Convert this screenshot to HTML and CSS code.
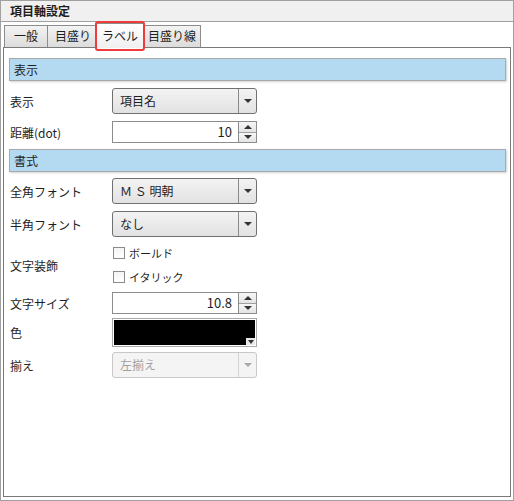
FILE: index.html
```html
<!DOCTYPE html>
<html lang="ja">
<head>
<meta charset="utf-8">
<title>項目軸設定</title>
<link rel="stylesheet" href="styles.css">
</head>
<body>
<div class="window">
  <div class="titlebar">項目軸設定</div>
  <div class="tabs">
    <div class="tab">一般</div>
    <div class="tab">目盛り</div>
    <div class="tab selected">ラベル</div>
    <div class="tab">目盛り線</div>
  </div>
  <div class="panel">
    <div class="section">表示</div>
    <div class="row r-combo1">
      <div class="label">表示</div>
      <div class="combo"><span class="combo-text">項目名</span><span class="combo-btn"><i class="tri-down"></i></span></div>
    </div>
    <div class="row r-spin1">
      <div class="label">距離(dot)</div>
      <div class="spin"><span class="spin-text">10</span><span class="spin-btns"><span class="sb"><i class="tri-up"></i></span><span class="sb"><i class="tri-down"></i></span></span></div>
    </div>
    <div class="section s2">書式</div>
    <div class="row r-combo2">
      <div class="label">全角フォント</div>
      <div class="combo"><span class="combo-text">Ｍ Ｓ 明朝</span><span class="combo-btn"><i class="tri-down"></i></span></div>
    </div>
    <div class="row r-combo3">
      <div class="label">半角フォント</div>
      <div class="combo"><span class="combo-text">なし</span><span class="combo-btn"><i class="tri-down"></i></span></div>
    </div>
    <div class="row r-deco">
      <div class="label">文字装飾</div>
      <div class="checks">
        <label class="check"><span class="box"></span>ボールド</label>
        <label class="check"><span class="box"></span>イタリック</label>
      </div>
    </div>
    <div class="row r-spin2">
      <div class="label">文字サイズ</div>
      <div class="spin"><span class="spin-text">10.8</span><span class="spin-btns"><span class="sb"><i class="tri-up"></i></span><span class="sb"><i class="tri-down"></i></span></span></div>
    </div>
    <div class="row r-color">
      <div class="label">色</div>
      <div class="color"><div class="swatch"></div><span class="color-drop"><i class="tri-down small"></i></span></div>
    </div>
    <div class="row r-combo4">
      <div class="label">揃え</div>
      <div class="combo disabled"><span class="combo-text">左揃え</span><span class="combo-btn"><i class="tri-down"></i></span></div>
    </div>
  </div>
</div>
</body>
</html>
```

FILE: styles.css
```css
* { box-sizing: border-box; }
html, body { margin: 0; padding: 0; background: #fff; }
body {
  font-family: "Noto Sans CJK JP", "Noto Sans", sans-serif;
  font-size: 12px;
  color: #1e1e1e;
}
.window {
  width: 514px;
  height: 501px;
  border: 1px solid #a0a0a0;
  display: flex;
  flex-direction: column;
}
.titlebar {
  height: 21px;
  background: #f0f0f0;
  border-bottom: 1px solid #a0a0a0;
  font-weight: bold;
  line-height: 19px;
  padding-left: 9px;
  flex: none;
}
.tabs {
  display: flex;
  align-items: flex-end;
  margin: 3px 0 0 3px;
  height: 22px;
  flex: none;
  position: relative;
  z-index: 1;
}
.tab {
  height: 22px;
  border: 1px solid #8c8c8c;
  border-bottom: none;
  margin-right: -1px;
  background: linear-gradient(#f3f3f3, #dcdcdc);
  padding: 0 7px;
  line-height: 20px;
  white-space: nowrap;
}
.tab:first-child { padding: 0 9px; }
.tab:last-child { padding: 0 4px; }
.tab.selected {
  position: relative;
  height: 25px;
  margin: 0 -1px -1px -2px;
  padding: 0 5px;
  background: linear-gradient(#ffffff, #f0f0f0);
  border-color: #8c8c8c;
  line-height: 24px;
  z-index: 2;
}
.tab.selected::after {
  content: "";
  position: absolute;
  left: -2px;
  right: -2px;
  top: -3px;
  bottom: -3px;
  border: 2px solid #ee3b3b;
  border-radius: 3px;
}
.panel {
  flex: 1;
  margin: 0 2px 3px 2px;
  border: 1px solid #7a7a7a;
  padding: 10px 4px 0 5px;
  display: flex;
  flex-direction: column;
}
.section {
  height: 23px;
  background: #b4daf1;
  border: 1px solid #a9a9a9;
  box-shadow: 1px 1px 2px rgba(0,0,0,0.18);
  padding-left: 4px;
  line-height: 21px;
  flex: none;
}
.section.s2 { margin-top: 6px; }
.row {
  display: grid;
  grid-template-columns: 102px 145px;
  align-items: center;
  padding-left: 1px;
  flex: none;
}
.label { white-space: nowrap; }
.r-combo1 { margin-top: 7px; height: 26px; }
.r-spin1 { margin-top: 7px; height: 22px; }
.r-combo2 { margin-top: 6px; height: 26px; }
.r-combo3 { margin-top: 7px; height: 26px; }
.r-deco { margin-top: 4px; height: 48px; }
.r-spin2 { margin-top: 3px; height: 22px; }
.r-color { margin-top: 4px; height: 29px; }
.r-combo4 { margin-top: 5px; height: 26px; }

.combo {
  height: 100%;
  display: flex;
  border: 1px solid #707070;
  border-radius: 3px;
  background: linear-gradient(#f3f3f3, #e2e2e2);
}
.combo-text {
  flex: 1;
  padding-left: 7px;
  line-height: 24px;
  white-space: nowrap;
}
.combo-btn {
  width: 18px;
  border-left: 1px solid #8a8a8a;
  display: flex;
  align-items: center;
  justify-content: center;
}
.combo.disabled {
  border-color: #c8c8c8;
  background: #f4f4f4;
  color: #a0a0a0;
}
.combo.disabled .combo-btn { border-left-color: #d4d4d4; }
.combo.disabled .tri-down { border-top-color: #a8a8a8; }

.tri-down {
  width: 0; height: 0;
  border-left: 4px solid transparent;
  border-right: 4px solid transparent;
  border-top: 4px solid #333;
}
.tri-up {
  width: 0; height: 0;
  border-left: 4px solid transparent;
  border-right: 4px solid transparent;
  border-bottom: 4px solid #333;
}
.tri-down.small {
  border-left-width: 3px;
  border-right-width: 3px;
  border-top-width: 4px;
  border-top-color: #333;
}

.spin {
  height: 100%;
  display: flex;
  border: 1px solid #8c8c8c;
  background: #fff;
}
.spin-text {
  flex: 1;
  text-align: right;
  padding-right: 6px;
  line-height: 20px;
  font-size: 13px;
}
.spin-btns {
  width: 18px;
  border-left: 1px solid #8c8c8c;
  display: flex;
  flex-direction: column;
}
.sb {
  flex: 1;
  display: flex;
  align-items: center;
  justify-content: center;
  background: linear-gradient(#f6f6f6, #e4e4e4);
}
.sb + .sb { border-top: 1px solid #a0a0a0; }

.checks {
  display: flex;
  flex-direction: column;
}
.check {
  height: 24px;
  display: flex;
  align-items: center;
  gap: 4px;
  padding-left: 1px;
  font-size: 11px;
}
.box {
  width: 12px;
  height: 12px;
  border: 1px solid #8a8a8a;
  background: linear-gradient(#f4f4f4, #ffffff);
}

.color {
  height: 100%;
  position: relative;
  border: 1px solid #a8a8a8;
  padding: 1px;
  width: 145px;
}
.swatch {
  height: 100%;
  background: #000;
}
.color-drop {
  position: absolute;
  right: 1px;
  bottom: 1px;
  width: 9px;
  height: 7px;
  background: #e8e8e8;
  display: flex;
  align-items: center;
  justify-content: center;
}
```
